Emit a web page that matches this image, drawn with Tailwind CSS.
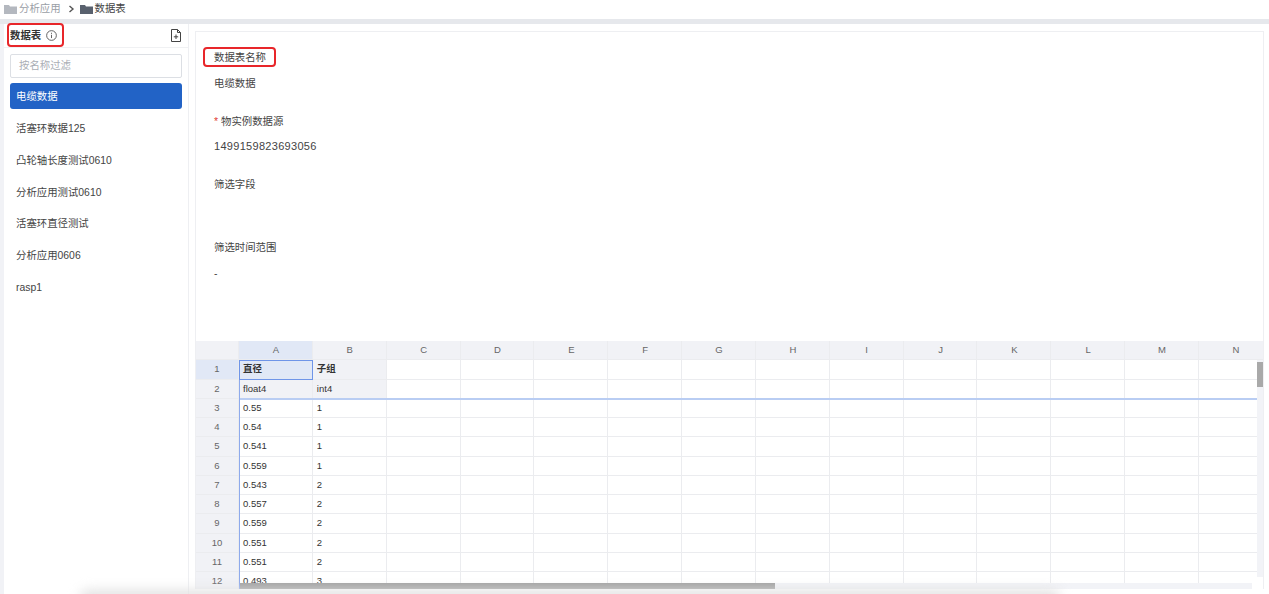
<!DOCTYPE html>
<html lang="en">
<head>
  <meta charset="UTF-8" />
  <title>数据表</title>
  <script src="https://cdn.jsdelivr.net/npm/@tailwindcss/browser@4"></script>
</head>
<body class="bg-white text-[#333] h-[594px] w-[1269px] overflow-hidden relative font-['Liberation_Sans','Noto_Sans_CJK_SC',sans-serif]">
  <!-- breadcrumb -->
  <nav class="h-[19px] pb-[2px] flex items-center pl-[4px] text-[10.400px] text-[#444]">
    <svg class="w-[13px] h-[10px] mr-[2px]" viewBox="0 0 13 10"><path fill="#b4b8bf" d="M0 1h5l1 1.500h7V10H0z"/></svg>
    <span class="text-[#9a9ea6]">分析应用</span>
    <svg class="w-[7px] h-[8px] ml-[7px] mr-[5px]" viewBox="0 0 7 8" fill="none"><path stroke="#555" stroke-width="1.400" d="M1.500 1l3.500 3-3.500 3"/></svg>
    <svg class="w-[13px] h-[10px] mr-[2px]" viewBox="0 0 13 10"><path fill="#59616e" d="M0 1h5l1 1.500h7V10H0z"/></svg>
    <span>数据表</span>
  </nav>
  <div class="h-[5px] bg-[#e6e8ec]"></div>

  <div class="flex h-[570px]">
    <div class="w-[4px] bg-[#f1f2f6]"></div>

    <!-- sidebar -->
    <aside class="w-[185px] border-r border-[#eeeff2] flex flex-col">
      <div class="h-[24px] flex items-center justify-between pl-[6px] pr-[7px] border-b border-[#f0f1f3]">
        <div class="flex items-center gap-[5px]">
          <span class="text-[10.400px] font-bold text-[#333]">数据表</span>
          <svg class="w-[11px] h-[11px]" viewBox="0 0 12 12" fill="none" stroke="#555"><circle cx="6" cy="6" r="5.300"/><path d="M6 5.200v3.600M6 3v1.200"/></svg>
        </div>
        <svg class="w-[10px] h-[13px]" viewBox="0 0 10 13" fill="none" stroke="#444"><path d="M.5.500h6l3 3v9H.5zM6.500.500v3h3M5 5.500v4.500M2.800 7.800h4.400"/></svg>
      </div>
      <div class="px-[6px] pt-[6px]">
        <div class="h-[24px] border border-[#dcdfe4] rounded-[2px] flex items-center pl-[8px] text-[10.400px] text-[#aaaeb5]">按名称过滤</div>
        <div class="mt-[5px] h-[26px] pt-[1px] bg-[#2263c6] rounded-[3px] flex items-center pl-[6px] text-[10.400px] text-white">电缆数据</div>
        <ul class="text-[10.400px] text-[#444]">
          <li class="h-[31.800px] mt-[4px] flex items-center pl-[6px]">活塞环数据125</li>
          <li class="h-[31.800px] flex items-center pl-[6px]">凸轮轴长度测试0610</li>
          <li class="h-[31.800px] flex items-center pl-[6px]">分析应用测试0610</li>
          <li class="h-[31.800px] flex items-center pl-[6px]">活塞环直径测试</li>
          <li class="h-[31.800px] flex items-center pl-[6px]">分析应用0606</li>
          <li class="h-[31.800px] flex items-center pl-[6px]">rasp1</li>
        </ul>
      </div>
    </aside>

    <!-- main panel -->
    <main class="ml-[6px] mt-[7px] w-[1069px] self-start border-t border-l border-r border-[#eeeff2] flex flex-col">
      <section class="h-[309px] pl-[18px] text-[10.400px] text-[#444]">
        <div class="h-[13px] mt-[19px] flex items-center">数据表名称</div>
        <div class="h-[13px] mt-[13px] flex items-center">电缆数据</div>
        <div class="h-[13px] mt-[25px] flex items-center"><span class="text-[#e0392f] mr-[3px]">*</span>物实例数据源</div>
        <div class="h-[13px] mt-[12px] flex items-center text-[11px] tracking-[0.300px]">1499159823693056</div>
        <div class="h-[13px] mt-[25px] flex items-center">筛选字段</div>
        <div class="h-[13px] mt-[50px] flex items-center">筛选时间范围</div>
        <div class="h-[13px] mt-[13px] flex items-center">-</div>
      </section>

      <!-- sheet -->
      <div class="relative h-[248px] overflow-hidden">
        <div id="sheet" class="grid grid-cols-[43px_repeat(14,73.850px)] auto-rows-[19.250px] w-[1077px] text-[9.500px] text-[#333]"></div>
        <div class="absolute left-[43px] top-[19px] w-[74px] h-[20px] border border-[#6f95e8]"></div>
        <div class="absolute left-[44px] right-[6px] top-[57px] h-[1.500px] bg-[#b9cdf3]"></div>
        <div class="absolute left-[43px] top-[39px] bottom-0 w-[1px] bg-[#8eaaec]"></div>
        <div class="absolute right-0 top-[19px] bottom-[12px] w-[6px] bg-[#f2f3f7]">
          <div class="h-[25px] mt-[2px] bg-[#a9a9a9]"></div>
        </div>
        <div class="absolute left-[44px] right-[11px] bottom-0 h-[6px] bg-[#f2f3f7]">
          <div class="h-full w-[535px] bg-[#a3a3a3]"></div>
        </div>
      </div>
    </main>
  </div>

  <!-- annotation boxes -->
  <div class="absolute left-[7px] top-[23px] w-[57px] h-[24px] border-2 border-[#e8262a] rounded-[4px]"></div>
  <div class="absolute left-[203px] top-[47px] w-[73px] h-[20px] border-2 border-[#e8262a] rounded-[4px]"></div>

  <!-- soft shadow along the bottom edge -->
  <div class="absolute left-[80px] bottom-[-10px] w-[980px] h-[14px] bg-[#e2e2e2] blur-[6px] rounded-full"></div>

  <script>
    const rows = [
      ['直径', '子组'], ['float4', 'int4'], ['0.55', '1'], ['0.54', '1'], ['0.541', '1'], ['0.559', '1'],
      ['0.543', '2'], ['0.557', '2'], ['0.559', '2'], ['0.551', '2'], ['0.551', '2'], ['0.493', '3']
    ];
    const sheet = document.getElementById('sheet');
    const cols = 'ABCDEFGHIJKLMN'.split('');

    function addCell(text, cls) {
      const cell = document.createElement('div');
      cell.className = 'flex items-center border-r border-b border-[#ebecef] overflow-hidden whitespace-nowrap ' + cls;
      cell.textContent = text;
      sheet.appendChild(cell);
    }

    addCell('', 'bg-[#f1f2f6]');
    cols.forEach((c, i) => addCell(c, 'justify-center pl-[1px] text-[#666] ' + (i === 0 ? 'bg-[#e1e8f6]' : 'bg-[#f1f2f6]')));

    rows.forEach((row, r) => {
      addCell(String(r + 1), 'justify-center text-[#666] ' + (r === 0 ? 'bg-[#e1e8f6]' : 'bg-[#f1f2f6]'));
      cols.forEach((c, i) => {
        let cls = 'pl-[4px] ';
        if (r < 2 && i < 2) cls += 'bg-[#f1f2f6] ';
        if (r === 0 && i === 0) cls = 'pl-[4px] bg-[#e1e8f6] ';
        if (r === 0) cls += 'font-bold ';
        addCell(i < 2 ? row[i] : '', cls);
      });
    });
  </script>
</body>
</html>
